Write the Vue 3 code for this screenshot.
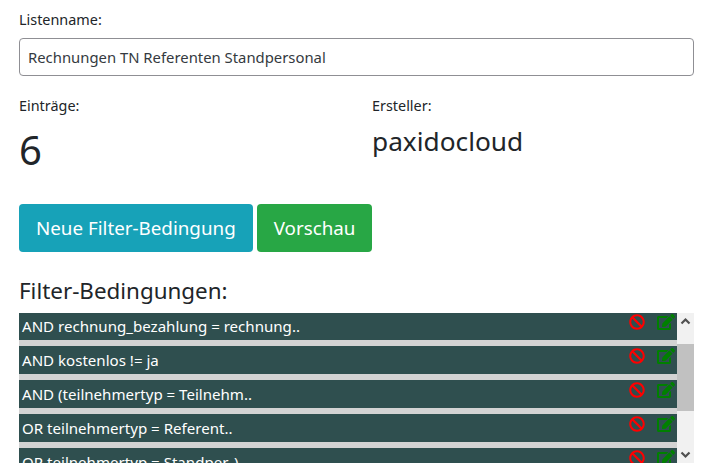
<script setup>
const rows = [
  'AND rechnung_bezahlung = rechnung..',
  'AND kostenlos != ja',
  'AND (teilnehmertyp = Teilnehm..',
  'OR teilnehmertyp = Referent..',
  'OR teilnehmertyp = Standper..)'
]
</script>

<template>
  <div class="page">
    <label class="label">Listenname:</label>
    <input class="name" value="Rechnungen TN Referenten Standpersonal" />
    <div class="stats">
      <div>
        <div class="label">Einträge:</div>
        <div class="count">6</div>
      </div>
      <div>
        <div class="label">Ersteller:</div>
        <div class="owner">paxidocloud</div>
      </div>
    </div>
    <div class="actions">
      <button class="btn info">Neue Filter-Bedingung</button>
      <button class="btn success">Vorschau</button>
    </div>
    <h2 class="title">Filter-Bedingungen:</h2>
    <div class="box">
      <div class="list">
        <div v-for="r in rows" :key="r" class="row">
          <span class="txt">{{ r }}</span>
          <svg class="ban" width="16" height="16" viewBox="0 0 512 512">
            <path fill="#f00" d="M256 8C119.034 8 8 119.033 8 256s111.034 248 248 248 248-111.034 248-248S392.967 8 256 8zm130.108 117.892c65.448 65.448 70 165.481 21.626 232.15L153.858 104.266c66.658-48.357 166.697-43.836 232.25 21.626zM125.892 386.108c-65.448-65.448-70-165.481-21.626-232.15l253.876 253.876c-66.658 48.357-166.697 43.836-232.25-21.626z" />
          </svg>
          <svg class="edit" width="18" height="16" viewBox="0 0 576 512">
            <path fill="#008000" d="M402.6 83.2l90.2 90.2c3.8 3.8 3.8 10 0 13.8L274.4 405.6l-92.8 10.3c-12.4 1.4-22.9-9.1-21.5-21.5l10.3-92.8L388.8 83.2c3.8-3.8 10-3.8 13.8 0zm162-22.9l-48.8-48.8c-15.2-15.2-39.9-15.2-55.2 0l-35.4 35.4c-3.8 3.8-3.8 10 0 13.8l90.2 90.2c3.8 3.8 10 3.8 13.8 0l35.4-35.4c15.2-15.3 15.2-40 0-55.2zM384 346.2V448H64V128h229.8c3.2 0 6.2-1.3 8.5-3.5l40-40c7.6-7.6 2.2-20.5-8.5-20.5H48C21.5 64 0 85.5 0 112v352c0 26.5 21.5 48 48 48h352c26.5 0 48-21.5 48-48V306.2c0-10.7-12.9-16-20.5-8.5l-40 40c-2.2 2.3-3.5 5.3-3.5 8.5z" />
          </svg>
        </div>
      </div>
      <div class="bar">
        <svg class="arrow" width="17" height="17" viewBox="0 0 17 17"><path d="M4.5 10.5l4-4 4 4" fill="none" stroke="#505050" stroke-width="2.2" /></svg>
        <div class="track"><div class="thumb"></div></div>
        <svg class="arrow" width="17" height="17" viewBox="0 0 17 17"><path d="M4.5 6.5l4 4 4-4" fill="none" stroke="#505050" stroke-width="2.2" /></svg>
      </div>
    </div>
  </div>
</template>

<style scoped>
.page {
  box-sizing: border-box;
  width: 702px;
  height: 476px;
  padding: 9px 8px 0 19px;
  font-family: "Noto Sans", "Open Sans", sans-serif;
  color: #212529;
  overflow: hidden;
  font-size: 14.4px;
}
.label {
  display: block;
  line-height: 21px;
  height: 21px;
}
.name {
  display: block;
  box-sizing: border-box;
  width: 100%;
  height: 38px;
  margin-top: 8px;
  padding: 0 8px;
  border: 1px solid #8f8f94;
  border-radius: 4px;
  font: inherit;
  font-size: 14.85px;
  color: #343a40;
}
.stats {
  display: grid;
  grid-template-columns: 353px 1fr;
  margin-top: 19px;
}
.count {
  font-size: 40px;
  line-height: 48px;
  margin-top: 10px;
}
.owner {
  font-size: 26.25px;
  line-height: 34px;
  margin-top: 8px;
}
.actions {
  display: flex;
  gap: 4px;
  margin-top: 30px;
}
.btn {
  height: 48px;
  padding: 0 17px;
  border: 0;
  border-radius: 4px;
  color: #fff;
  font: inherit;
  font-size: 18.8px;
}
.info { background: #17a2b8; }
.success { background: #28a745; }
.title {
  margin: 23px 0 0;
  font-size: 22.4px;
  font-weight: 400;
  line-height: 32px;
}
.box {
  display: flex;
  height: 150px;
  margin-top: 6px;
  overflow: hidden;
}
.list {
  flex: 1;
  min-width: 0;
  margin-top: -1px;
  background: #d3d3d3;
}
.row {
  display: flex;
  align-items: flex-start;
  height: 28px;
  margin-bottom: 6px;
  padding: 0 2px 0 3px;
  background: #2f4f4f;
  color: #fff;
  font-size: 15.08px;
  line-height: 28px;
}
.txt { flex: 1; white-space: nowrap; }
.ban { margin-top: 2px; }
.edit { margin: 2px 0 0 12px; }
.bar {
  width: 17px;
  display: flex;
  flex-direction: column;
  background: #f1f1f1;
}
.arrow { flex: none; }
.track {
  flex: 1;
  padding-top: 14px;
}
.thumb {
  height: 67px;
  background: #c1c1c1;
}
</style>
